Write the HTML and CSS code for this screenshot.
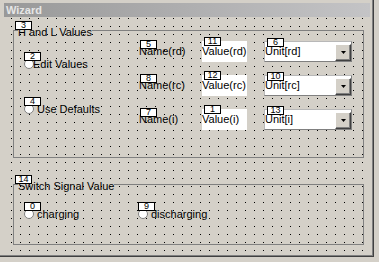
FILE: index.html
```html
<!DOCTYPE html>
<html lang="en">
<head>
    <meta charset="UTF-8">
    <meta name="viewport" content="width=device-width, initial-scale=1.0">
    <title>Wizard</title>
    <link rel="stylesheet" href="styles.css">
</head>
<body>
    <div class="window">
        <div class="frame">
            <div class="caption">Wizard</div>
            <div class="client">
                <fieldset class="group">
                    <legend><span class="tab">3</span>H and L Values</legend>
                    <div class="values">
                        <div class="radios">
                            <label class="radio tight"><span class="tab">2</span><span class="dot"></span>Edit Values</label>
                            <label class="radio second"><span class="tab">4</span><span class="dot"></span>Use Defaults</label>
                        </div>
                        <div class="fields">
                            <div class="name"><span class="tab">5</span>Name(rd)</div>
                            <div class="edit"><span class="tab">11</span>Value(rd)</div>
                            <div class="combo"><span class="tab">6</span><span class="combo-text">Unit[rd]</span><span class="drop"><svg width="5" height="3" viewBox="0 0 5 3"><polygon points="0,0 5,0 2.5,3" fill="#000"/></svg></span></div>

                            <div class="name"><span class="tab">8</span>Name(rc)</div>
                            <div class="edit"><span class="tab">12</span>Value(rc)</div>
                            <div class="combo"><span class="tab">10</span><span class="combo-text">Unit[rc]</span><span class="drop"><svg width="5" height="3" viewBox="0 0 5 3"><polygon points="0,0 5,0 2.5,3" fill="#000"/></svg></span></div>

                            <div class="name"><span class="tab">7</span>Name(i)</div>
                            <div class="edit"><span class="tab">1</span>Value(i)</div>
                            <div class="combo"><span class="tab">13</span><span class="combo-text">Unit[i]</span><span class="drop"><svg width="5" height="3" viewBox="0 0 5 3"><polygon points="0,0 5,0 2.5,3" fill="#000"/></svg></span></div>
                        </div>
                    </div>
                </fieldset>
                <fieldset class="group group-switch">
                    <legend><span class="tab">14</span>Switch Signal Value</legend>
                    <div class="switch">
                        <label class="radio"><span class="tab">0</span><span class="dot"></span>charging</label>
                        <label class="radio"><span class="tab">9</span><span class="dot"></span>discharging</label>
                    </div>
                </fieldset>
            </div>
        </div>
    </div>
</body>
</html>
```

FILE: styles.css
```css
body {
    margin: 0;
    background-color: #d4d0c8;
    font-family: "Liberation Sans", Arial, sans-serif;
    font-size: 11px;
    line-height: 13px;
    color: #000;
}
.window {
    width: 374px;
    height: 257px;
    box-sizing: border-box;
    border-right: 1px solid #404040;
    border-bottom: 1px solid #404040;
}
.frame {
    height: 256px;
    box-sizing: border-box;
    display: flex;
    flex-direction: column;
    padding: 3px 2px 0 4px;
    border-right: 1px solid #808080;
    border-bottom: 1px solid #808080;
}
.caption {
    height: 14px;
    line-height: 14px;
    padding-left: 2px;
    font-weight: bold;
    color: #e6e6e6;
    background: linear-gradient(to right, #999999, #c4c4c6);
}
.client {
    flex: 1;
    position: relative;
    z-index: 0;
    padding-top: 5px;
}
/* designer grid: 1px dots every 9px across, 8px down */
.client::before {
    content: '';
    position: absolute;
    inset: 0;
    z-index: -1;
    background: linear-gradient(to right, #000 1px, transparent 1px) 7px 0 / 9px 100%;
    -webkit-mask: linear-gradient(#000 1px, transparent 1px) 0 1px / 100% 8px;
    mask: linear-gradient(#000 1px, transparent 1px) 0 1px / 100% 8px;
}
.group {
    width: 351px;
    box-sizing: border-box;
    margin: 0 0 0 9px;
    padding: 0;
    border: 1px solid #808080;
    min-inline-size: 0;
}
.group legend {
    position: relative;
    padding: 4px 0 0;
    margin-left: 4px;
    line-height: 13px;
}
.group-switch {
    margin-top: 18px;
}
.tab {
    position: absolute;
    width: 17px;
    height: 9px;
    box-sizing: border-box;
    border: 1px solid #000;
    background-color: #fff;
    font-size: 9px;
    line-height: 7px;
    text-align: center;
    color: #000;
    z-index: 1;
}
.group legend .tab {
    top: -1px;
    left: -3px;
}
.values {
    display: flex;
    padding: 2px 0 27px;
}
.radios {
    width: 125px;
    box-sizing: border-box;
    padding: 17px 0 0 10px;
}
.radio {
    position: relative;
    display: flex;
    align-items: flex-start;
    height: 13px;
    white-space: nowrap;
}
.radio .tab {
    top: -6px;
    left: 0;
}
.radio.second {
    margin-top: 32px;
}
.dot {
    width: 10px;
    height: 10px;
    box-sizing: border-box;
    margin: 1px 3px 0 0;
    border: 1px solid #808080;
    border-radius: 50%;
    background-color: #fff;
}
.tight .dot {
    margin-right: -1px;
}
.fields {
    display: grid;
    grid-template-columns: 63px 62px 88px;
    grid-auto-rows: 21px;
    row-gap: 13px;
}
.name,
.edit,
.combo {
    position: relative;
    box-sizing: border-box;
    white-space: nowrap;
}
.name {
    padding-top: 4px;
}
.name .tab {
    top: -1px;
    left: 1px;
}
.edit {
    width: 45px;
    padding-top: 4px;
    background-color: #fff;
}
.edit .tab,
.combo .tab {
    top: -4px;
    left: 2px;
}
.combo {
    display: flex;
    background-color: #fff;
    border: 1px solid #b8b8b8;
    border-right-color: #808080;
    border-bottom-color: #808080;
}
.combo-text {
    flex: 1;
    padding-top: 3px;
}
.drop {
    width: 16px;
    height: 17px;
    box-sizing: border-box;
    margin-top: 2px;
    display: flex;
    align-items: center;
    justify-content: center;
    background-color: #d4d0c8;
    border: 1px solid;
    border-color: #fff #404040 #404040 #fff;
    box-shadow: inset -1px -1px #808080;
}
.switch {
    display: grid;
    grid-template-columns: 114px auto;
    padding: 15px 0 23px 10px;
}
```
